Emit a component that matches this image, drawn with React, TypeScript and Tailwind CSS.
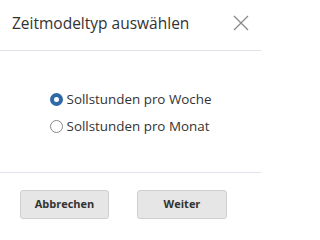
import React from "react";

export default function App() {
  return (
    <div
      className="w-[261px] h-[234px] bg-white flex flex-col text-[#333333]"
      style={{ fontFamily: '"Open Sans", "Noto Sans", sans-serif' }}
    >
      <div className="h-[51px] flex items-center justify-between pl-[12px] pr-[12px] border-b border-[#e1e1ea] shrink-0">
        <span className="text-[15.5px] leading-none mt-[-2px]">Zeitmodeltyp auswählen</span>
        <svg width="16" height="16" viewBox="0 0 16 16" className="mt-[-4px]">
          <path d="M1 1 L15 15 M15 1 L1 15" stroke="#8a8a8a" strokeWidth="1.3" fill="none" />
        </svg>
      </div>
      <div className="h-[122px] flex flex-col items-center pt-[42px] border-b border-[#e1e1ea] shrink-0">
        <div className="flex flex-col gap-[14px]">
          <label className="flex items-center gap-[4px] h-[13px]">
            <span className="w-[13px] h-[13px] rounded-full border-[4px] border-[#2f69a6] bg-white shrink-0" />
            <span className="text-[13.4px] leading-none">Sollstunden pro Woche</span>
          </label>
          <label className="flex items-center gap-[4px] h-[13px]">
            <span className="w-[13px] h-[13px] rounded-full border border-[#8a8a8a] bg-white shrink-0" />
            <span className="text-[13.4px] leading-none">Sollstunden pro Monat</span>
          </label>
        </div>
      </div>
      <div className="flex pt-[17px] pl-[20px] gap-[28px]">
        <button className="w-[89px] h-[29px] rounded-[3px] bg-[#e6e6e6] border border-[#cfcfcf] text-[11px] font-bold text-[#333333]">
          Abbrechen
        </button>
        <button className="w-[90px] h-[29px] rounded-[3px] bg-[#e6e6e6] border border-[#cfcfcf] text-[11px] font-bold text-[#333333]">
          Weiter
        </button>
      </div>
    </div>
  );
}
